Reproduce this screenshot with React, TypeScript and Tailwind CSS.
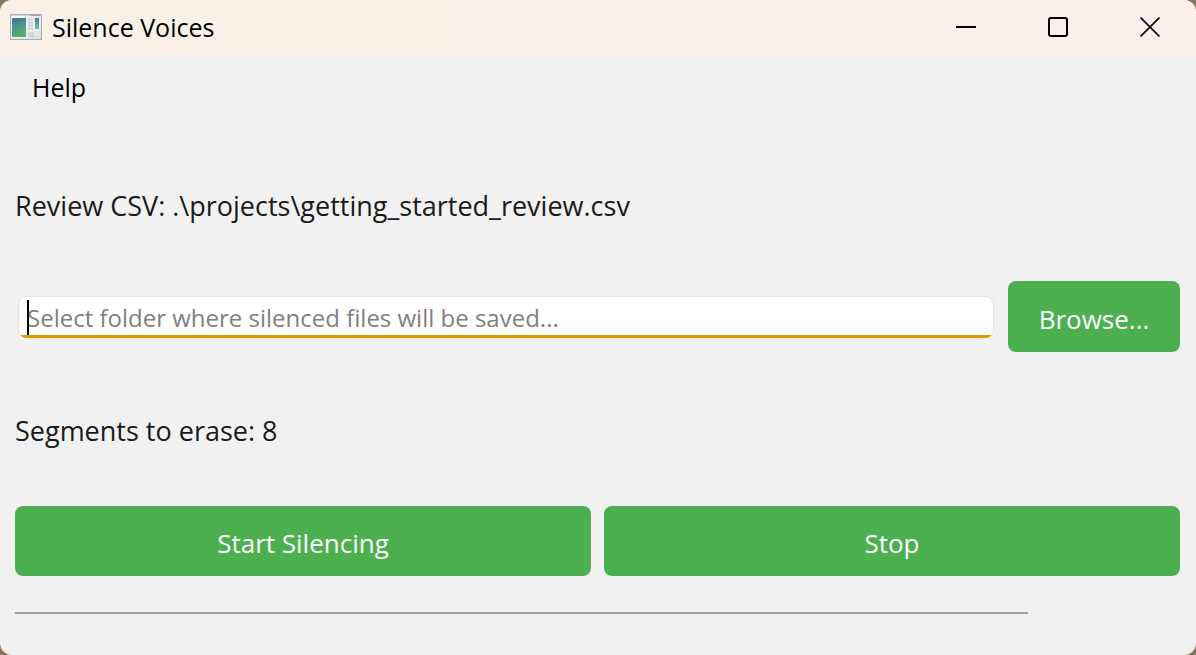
import { useState } from "react";

function AppIcon() {
  return (
    <svg width="32" height="26" viewBox="0 0 32 26" aria-hidden="true" className="shrink-0">
      <defs>
        <linearGradient id="pane" x1="0" y1="0" x2="0.3" y2="1">
          <stop offset="0" stopColor="#4676a0" />
          <stop offset="0.5" stopColor="#458c8c" />
          <stop offset="1" stopColor="#58a873" />
        </linearGradient>
        <linearGradient id="strip" x1="0" y1="0" x2="0" y2="1">
          <stop offset="0" stopColor="#44759c" />
          <stop offset="1" stopColor="#7cc48c" />
        </linearGradient>
        <linearGradient id="frame" x1="0" y1="0" x2="1" y2="1">
          <stop offset="0" stopColor="#ffffff" />
          <stop offset="1" stopColor="#dcdde0" />
        </linearGradient>
      </defs>
      <rect x="0.5" y="0.5" width="31" height="25" fill="url(#frame)" stroke="#a9adb2" />
      <path d="M1 1.500h30" stroke="#ccd4df" />
      <path d="M21 1.500h9" stroke="#97a8bd" />
      <rect x="2" y="4" width="14" height="19" fill="url(#pane)" />
      <path d="M2 13c4-4 9-5 14-5v15H2z" fill="#5cb878" opacity="0.25" />
      <path d="M18 5.500h5M18 8.500h5M18 11.500h5M18 14.500h5M18 19.500h6M18 22h6" stroke="#c7c9cc" strokeWidth="1.500" />
      <rect x="25" y="4" width="4" height="11" fill="url(#strip)" />
    </svg>
  );
}

function TitleBar() {
  return (
    <header className="flex h-[55px] items-center bg-linear-to-r from-[#f9f1e7] to-[#f9f0eb] pb-[2px] pl-[10px]">
      <AppIcon />
      <h1 className="ml-[10px] grow text-[25px] leading-8 text-black">Silence Voices</h1>
      <div className="flex">
        <button type="button" aria-label="Minimize" className="flex h-[52px] w-[92px] items-center justify-center">
          <svg width="20" height="20" viewBox="0 0 20 20"><path d="M0 10h20" stroke="#000" strokeWidth="2" /></svg>
        </button>
        <button type="button" aria-label="Maximize" className="flex h-[52px] w-[92px] items-center justify-center">
          <svg width="20" height="20" viewBox="0 0 20 20"><rect x="1" y="1" width="18" height="18" rx="2" fill="none" stroke="#000" strokeWidth="2" /></svg>
        </button>
        <button type="button" aria-label="Close" className="flex h-[52px] w-[92px] items-center justify-center">
          <svg width="20" height="20" viewBox="0 0 20 20"><path d="M.5.5l19 19M19.500.5l-19 19" stroke="#111" strokeWidth="1.800" /></svg>
        </button>
      </div>
    </header>
  );
}

const green = "rounded-lg bg-[#4caf50] pt-1 text-[26px] leading-9 text-white";

export default function App() {
  const [folder, setFolder] = useState("");
  return (
    <div className="min-h-screen bg-[#85765f] font-['Open_Sans','Noto_Sans',sans-serif]">
      <div className="flex min-h-screen flex-col overflow-hidden rounded-xl bg-[#f1f1f1] text-[27px] leading-9 text-[#1a1a1a]">
        <TitleBar />
        <nav className="flex h-16 items-center px-5">
          <button type="button" className="px-3 text-[25px] leading-8 text-black">Help</button>
        </nav>
        <main className="flex grow flex-col px-4 pt-[69px] pl-[15px]">
          <p>Review CSV: .\projects\getting_started_review.csv</p>
          <div className="mt-[57px] flex items-center gap-[14px]">
            <div className="relative ml-[3px] flex h-[42px] grow overflow-hidden rounded-lg border border-b-0 border-[#e3e3e3] bg-white">
              <input
                type="text"
                aria-label="Output folder"
                value={folder}
                onChange={(e) => setFolder(e.target.value)}
                placeholder="Select folder where silenced files will be saved..."
                className="w-full min-w-0 bg-transparent px-2 pt-[2px] text-[24px] leading-9 outline-none placeholder:text-[#808080]"
              />
              <span className="absolute top-[3px] left-2 h-9 w-[2px] bg-black" />
              <span className="absolute inset-x-0 bottom-0 h-[3px] bg-[#e09a00]" />
            </div>
            <button type="button" className={`${green} h-[71px] w-[172px]`}>Browse...</button>
          </div>
          <p className="mt-[61px]">Segments to erase: 8</p>
          <div className="mt-[57px] grid grid-cols-2 gap-[13px]">
            <button type="button" className={`${green} h-[70px]`}>Start Silencing</button>
            <button type="button" className={`${green} h-[70px]`}>Stop</button>
          </div>
          <div role="progressbar" aria-label="Silencing progress" aria-valuenow={0} className="mt-9 mr-[152px] h-[2px] bg-[#9c9ca0]" />
        </main>
      </div>
    </div>
  );
}
